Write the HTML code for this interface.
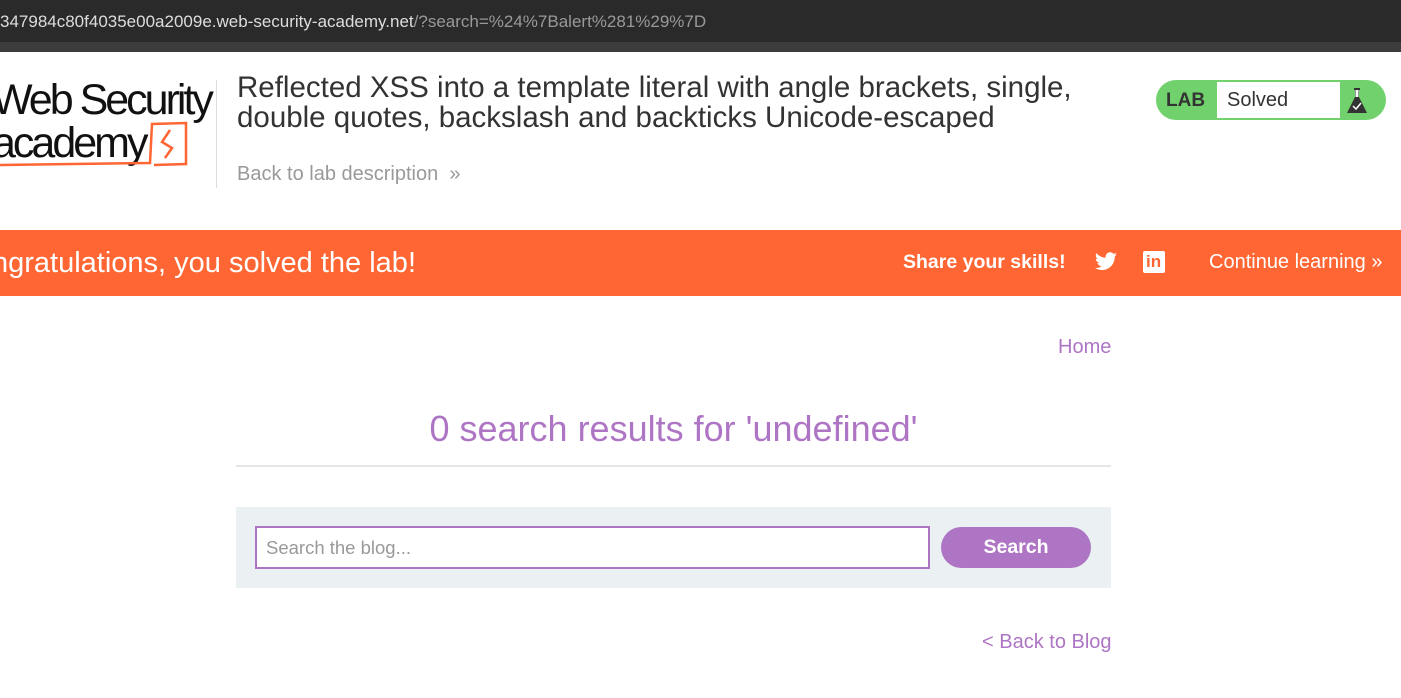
<!DOCTYPE html>
<html><head><style>
body{margin:0;width:1401px;height:698px;overflow:hidden;background:#fff;font-family:"Liberation Sans",sans-serif;position:relative}
.a{position:absolute;white-space:nowrap}
</style></head><body>
<div class="a" style="left:0;top:0;width:1401px;height:42px;background:#2a2a2a"></div>
<div class="a" style="left:0;top:42px;width:1401px;height:10px;background:#3c3c3c"></div>
<div class="a" style="left:0;top:12px;color:#ddd;font-size:17px">347984c80f4035e00a2009e.web-security-academy.net<span style="color:#999">/?search=%24%7Balert%281%29%7D</span></div>

<div class="a" style="left:-8px;top:78px;font-size:43px;letter-spacing:-3px;color:#111;line-height:44px">Web Security</div>
<div class="a" style="left:-8px;top:121px;font-size:43px;letter-spacing:-3px;color:#111;line-height:44px">academy</div>
<svg class="a" style="left:0;top:120px" width="190" height="50"><path d="M0 45 L150 43 L152 4 L186 3 L186 44 L154 45" fill="none" stroke="#ff6633" stroke-width="2.5"/><path d="M170 10 L162 22 L172 28 L165 38" fill="none" stroke="#ff6633" stroke-width="2.5"/></svg>
<div class="a" style="left:216px;top:80px;width:1px;height:108px;background:#ddd"></div>

<div class="a" style="left:237px;top:73px;font-size:29.5px;color:#333;line-height:30px">Reflected XSS into a template literal with angle brackets, single,<br>double quotes, backslash and backticks Unicode-escaped</div>
<div class="a" style="left:237px;top:163px;font-size:20px;color:#999">Back to lab description &nbsp;»</div>

<div class="a" style="left:1156px;top:80px;width:230px;height:40px;border-radius:20px;background:#70d16d"></div>
<div class="a" style="left:1217px;top:82px;width:123px;height:36px;background:#fff"></div>
<div class="a" style="left:1166px;top:90px;font-size:19px;font-weight:bold;color:#333">LAB</div>
<div class="a" style="left:1227px;top:89px;font-size:20px;color:#333">Solved</div>
<svg class="a" style="left:1346px;top:87px" width="24" height="28"><rect x="8" y="1" width="6" height="2" fill="#333"/><path d="M9 3 L13 3 L13 10 L21 26 L1 26 L9 10 Z" fill="#333"/><rect x="9.5" y="3" width="3" height="7" fill="#fff"/><path d="M7 19 L10 22 L15 16" stroke="#fff" stroke-width="1.5" fill="none"/></svg>

<div class="a" style="left:0;top:230px;width:1401px;height:66px;background:#ff6633"></div>
<div class="a" style="left:-8px;top:247px;font-size:29px;color:#fff">ngratulations, you solved the lab!</div>
<div class="a" style="left:903px;top:251px;font-size:19.5px;font-weight:bold;color:#fff">Share your skills!</div>
<svg class="a" style="left:1094px;top:252px" width="24" height="20" viewBox="0 0 24 20"><path d="M23 2.5c-.8.4-1.7.6-2.6.7.9-.6 1.6-1.4 2-2.5-.9.5-1.9.9-2.9 1.1C18.6.9 17.4.3 16.1.3c-2.5 0-4.5 2-4.5 4.5 0 .4 0 .7.1 1C7.9 5.6 4.6 3.8 2.4 1.1c-.4.7-.6 1.4-.6 2.3 0 1.6.8 2.9 2 3.7-.7 0-1.4-.2-2-.6 0 2.2 1.6 4 3.6 4.4-.4.1-.8.2-1.2.2-.3 0-.6 0-.8-.1.6 1.8 2.2 3.1 4.2 3.1-1.5 1.2-3.5 1.9-5.6 1.9H1c2 1.3 4.4 2 6.9 2 8.3 0 12.8-6.9 12.8-12.8v-.6c.9-.6 1.6-1.4 2.3-2.1z" fill="#fff"/></svg>
<div class="a" style="left:1143px;top:251px;width:22px;height:22px;background:#fff;border-radius:2px"></div>
<div class="a" style="left:1146px;top:252px;font-size:17px;font-weight:bold;color:#ff6633">in</div>
<div class="a" style="left:1209px;top:251px;font-size:20px;color:#fff">Continue learning »</div>

<div class="a" style="left:1058px;top:336px;font-size:20px;color:#ae75c5">Home</div>
<div class="a" style="left:236px;width:875px;top:408px;text-align:center;font-size:36px;color:#ae75c5">0 search results for 'undefined'</div>
<div class="a" style="left:236px;top:465px;width:875px;height:2px;background:#e6e6e6"></div>
<div class="a" style="left:236px;top:507px;width:875px;height:81px;background:#ebf0f2"></div>
<div class="a" style="left:255px;top:526px;width:671px;height:39px;border:2px solid #ae75c5;background:#fff"></div>
<div class="a" style="left:266px;top:537px;font-size:18.5px;color:#999">Search the blog...</div>
<div class="a" style="left:941px;top:527px;width:150px;height:41px;border-radius:21px;background:#ae75c5;color:#fff;font-weight:bold;font-size:19.5px;text-align:center;line-height:41px">Search</div>
<div class="a" style="left:982px;top:631px;font-size:20px;color:#ae75c5">&lt; Back to Blog</div>
</body></html>
